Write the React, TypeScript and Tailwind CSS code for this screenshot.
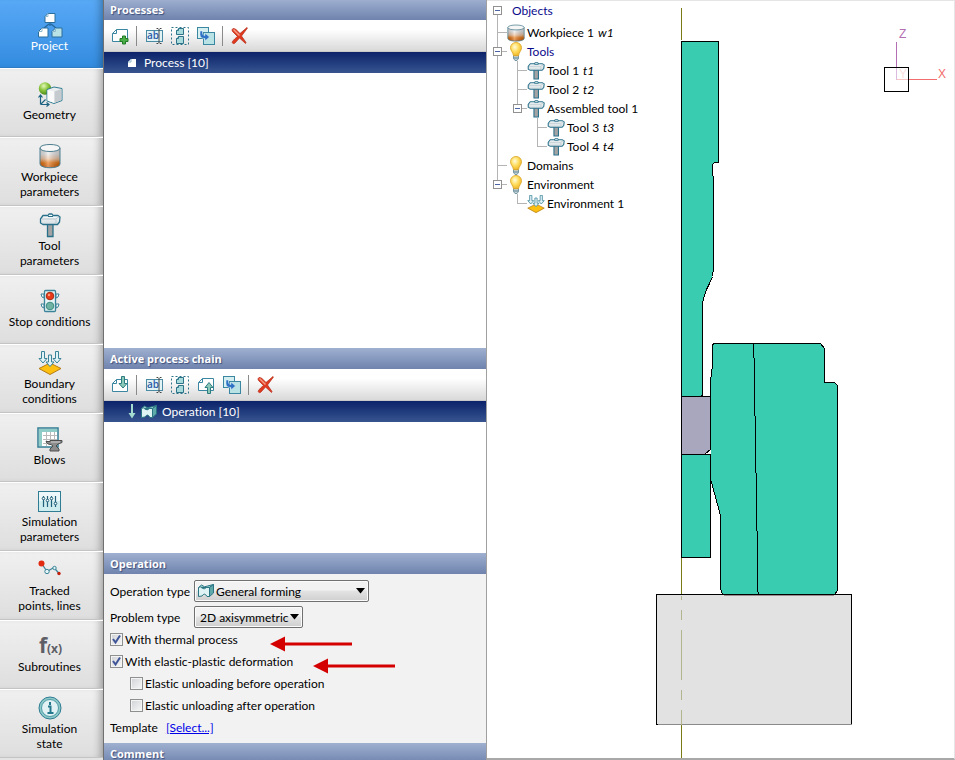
import { useState, type ReactNode } from 'react';

type IconProps = { small?: boolean };

function WorkpieceIcon({ small }: IconProps) {
    return (
        <svg width={small ? 18 : 26} height={small ? 18 : 26} viewBox={small ? '2 0 22 26' : '0 0 26 26'} preserveAspectRatio="none">
            <defs>
                <linearGradient id="heat" x1="0" y1="0" x2="0" y2="1">
                    <stop offset="0.3" stopColor="#e8e8e8" />
                    <stop offset="0.55" stopColor="#efc3a0" />
                    <stop offset="0.75" stopColor="#e8730c" />
                    <stop offset="1" stopColor="#c85400" />
                </linearGradient>
                <linearGradient id="shine" x1="0" y1="0" x2="1" y2="0">
                    <stop offset="0" stopColor="#000" stopOpacity="0.15" />
                    <stop offset="0.4" stopColor="#fff" stopOpacity="0.35" />
                    <stop offset="1" stopColor="#000" stopOpacity="0.2" />
                </linearGradient>
            </defs>
            <path d="M3 5v16c0 5 20 5 20 0V5z" fill="url(#heat)" />
            <path d="M3 5v16c0 5 20 5 20 0V5z" fill="url(#shine)" />
            <ellipse cx="13" cy="5" rx="10" ry="3.500" fill="#f6f6f6" />
            <path d="M3 5v16c0 5 20 5 20 0V5M3 5c0-4.700 20-4.700 20 0s-20 4.700-20 0z" fill="none" stroke="#4f7f90" />
        </svg>
    );
}

function HammerIcon({ small }: IconProps) {
    return (
        <svg width={small ? 18 : 26} height={small ? 18 : 26} viewBox={small ? '2 1 22 25' : '0 0 26 26'} preserveAspectRatio="none">
            <defs>
                <linearGradient id="steel" x1="0" y1="0" x2="0" y2="1">
                    <stop offset="0" stopColor="#fff" />
                    <stop offset="1" stopColor="#d3dde0" />
                </linearGradient>
            </defs>
            <path d="M10.500 11h5.500v13.500h-5.500z" fill="#a3a3a3" stroke="#28708a" strokeWidth="1.300" />
            <path d="M3.500 7l2.500-3.500h5l1-1.500h3l1 1.500h5l2 1.500-0.500 5-2 2.500H6l-2.500-1.500z" fill="url(#steel)" stroke="#28708a" strokeWidth="1.300" strokeLinejoin="round" />
            <path d="M4.500 7h14l3.500-2M19 7.500v4" fill="none" stroke="#b7c7cd" />
            <path d="M11 4.500h5" stroke="#28708a" />
        </svg>
    );
}

function BoundaryIcon({ small }: IconProps) {
    const arrow = 'h3v7h2.500l-4 4.500-4-4.500h2.500z';
    return (
        <svg width={small ? 18 : 26} height={small ? 18 : 26} viewBox={small ? '1 1 24 24' : '0 0 26 26'}>
            <path d="M2 18.500l11-5.500 11 5.500-11 6z" fill="#fdbf10" stroke="#b57b14" />
            <path d={`M4.500 1.500${arrow}M18.500 1.500${arrow}`} fill="#dff2f5" stroke="#3a8398" />
            <path d={`M11.500 5${arrow}`} fill="#dff2f5" stroke="#3a8398" />
        </svg>
    );
}

function ProjectIcon() {
    return (
        <svg width="26" height="26" viewBox="0 0 26 26">
            <path d="M13 11v3M7 16l5-4M19 16l-5-4" stroke="#24679b" strokeWidth="1.300" />
            <path d="M11 1.500h7v9H8v-6z" fill="#fff" stroke="#2a6f9c" />
            <path d="M5 16h6v9H1.500v-5.500z" fill="#fff" stroke="#2a6f9c" />
            <path d="M18.500 16H25v9H15v-5.500z" fill="#b9e2e6" stroke="#2a6f9c" />
            <path d="M11 1.500V4.500H8M5 16v3.500H1.500M18.500 16v3.500H15" fill="none" stroke="#8fb8cc" />
        </svg>
    );
}

function GeometryIcon() {
    return (
        <svg width="26" height="26" viewBox="0 0 26 26">
            <defs>
                <radialGradient id="ball" cx="0.4" cy="0.3" r="0.7">
                    <stop offset="0" stopColor="#e3f8b8" />
                    <stop offset="0.5" stopColor="#8cc63f" />
                    <stop offset="1" stopColor="#4c8a1a" />
                </radialGradient>
            </defs>
            <circle cx="8" cy="7.500" r="6.200" fill="url(#ball)" />
            <path d="M10 8.500l7-2.500 8 1.500v12l-8 3-7-2.500z" fill="#e9edef" stroke="#2f7c93" strokeLinejoin="round" />
            <path d="M10.500 9l7 1.500v11.500l-7-2.500z" fill="#fafafa" />
            <path d="M17.500 10.500l7-2.500v11l-7 3z" fill="#c4cacd" />
            <path d="M3.500 23.500V15M1.500 16.500l2-2.500 2 2.500M3.500 23.500H11M9.500 21.500l2.500 2-2.500 2M3.500 23.500l5-5" fill="none" stroke="#1e6482" strokeWidth="1.200" />
        </svg>
    );
}

function TrafficLightIcon() {
    return (
        <svg width="26" height="26" viewBox="0 0 26 26">
            <path d="M7 6H4l1 3 2 1zM7 16H4l1 3 2 1zM19 6h3l-1 3-2 1zM19 16h3l-1 3-2 1z" fill="#fff" stroke="#3a8398" />
            <rect x="7.500" y="2.500" width="11" height="21" rx="1" fill="#e5f4f6" stroke="#3a8398" strokeWidth="1.300" />
            <circle cx="13" cy="8" r="3.800" fill="#ea3a17" stroke="#a32d18" />
            <circle cx="12" cy="7" r="1.200" fill="#ff9c7d" />
            <circle cx="13" cy="18" r="3.800" fill="#6fb3a4" stroke="#3d8b80" />
        </svg>
    );
}

function BlowsIcon() {
    return (
        <svg width="26" height="26" viewBox="0 0 26 26">
            <rect x="1" y="2" width="20" height="19" fill="#fff" stroke="#2f7c93" strokeWidth="1.500" />
            <path d="M2 3h18v3H5v14H2z" fill="#8fccc8" />
            <path d="M6 9.500h14M6 13.500h14M6 17.500h6M9.500 6v14M13.500 6v8M17.500 6v8" stroke="#b9b9b9" />
            <path d="M9 15.500h4v-1h12v2l-4 1.500-2 2 3 3v2h-9v-2l3-3-2-1.500c-3 0-4-1-5-3z" fill="#8b8b8b" stroke="#4c4c4c" />
            <path d="M14 16h9" stroke="#d0d0d0" />
        </svg>
    );
}

function SlidersIcon() {
    return (
        <svg width="26" height="26" viewBox="0 0 26 26">
            <rect x="1.500" y="3.500" width="22" height="20" fill="#cfecee" stroke="#2f7c93" />
            <rect x="2" y="4" width="21" height="9" fill="#ecf8f9" />
            <path d="M6.500 8v11M10.500 8v11M14.500 8v11M18.500 8v11" stroke="#20607a" strokeWidth="1.200" />
            <g fill="#fff" stroke="#20607a">
                <circle cx="6.500" cy="10.500" r="1.300" />
                <circle cx="10.500" cy="12.500" r="1.300" />
                <circle cx="14.500" cy="10.500" r="1.300" />
                <circle cx="18.500" cy="15.500" r="1.300" />
            </g>
        </svg>
    );
}

function TrackedIcon() {
    return (
        <svg width="26" height="26" viewBox="0 0 26 26">
            <path d="M5 7l5 7.500 7-4 5 6" fill="none" stroke="#3a8398" strokeWidth="1.300" />
            <circle cx="4.500" cy="6.500" r="3" fill="#e12a10" />
            <circle cx="10" cy="14.500" r="2.200" fill="#e5f4f6" stroke="#3a8398" />
            <circle cx="17.500" cy="11" r="1.700" fill="#e5f4f6" stroke="#3a8398" />
            <circle cx="22" cy="16.500" r="1.700" fill="#c41d0c" />
        </svg>
    );
}

function FunctionIcon() {
    return (
        <svg width="26" height="26" viewBox="0 0 26 26" fill="#5e5e66" fontFamily="Open Sans, sans-serif" fontWeight="700">
            <text x="2" y="20" fontSize="21">f</text>
            <text x="10" y="20" fontSize="12">(x)</text>
        </svg>
    );
}

function InfoIcon() {
    return (
        <svg width="26" height="26" viewBox="0 0 26 26">
            <circle cx="13" cy="13" r="11" fill="#8cc9c8" stroke="#2f7c93" />
            <circle cx="13" cy="13" r="8.500" fill="#e2f2f4" stroke="#4f9aa6" />
            <path d="M13 7v3M11 11.500h2.500V18M10.500 18h6" fill="none" stroke="#24788c" strokeWidth="2" />
        </svg>
    );
}

function BulbIcon() {
    return (
        <svg width="18" height="19" viewBox="0 0 18 19">
            <defs>
                <radialGradient id="glow" cx="0.4" cy="0.35" r="0.7">
                    <stop offset="0" stopColor="#fffbe0" />
                    <stop offset="0.45" stopColor="#ffe066" />
                    <stop offset="1" stopColor="#f0b21c" />
                </radialGradient>
            </defs>
            <path d="M6.500 13.500h5v3l-1.500 2h-2l-1.500-2z" fill="#c4d3d8" stroke="#5f8594" strokeWidth="0.800" />
            <path d="M9 0.500c-3.200 0-5.500 2.300-5.500 5.200 0 3.300 2.500 4.300 3 8h5c0.500-3.700 3-4.700 3-8 0-2.900-2.300-5.200-5.500-5.200z" fill="url(#glow)" stroke="#d9a326" strokeWidth="0.800" />
            <path d="M6.500 16h5" stroke="#5f8594" />
        </svg>
    );
}

function FormingIcon() {
    return (
        <svg width="18" height="16" viewBox="0 0 18 16">
            <path d="M1.500 4.500L4.500 2q3 3 6 1l6-1.500-4 3z" fill="#93cbc9" stroke="#2b7583" />
            <path d="M12.500 4.500l4-3V10l-4 3.500z" fill="#5fa9aa" stroke="#2b7583" />
            <path d="M1.500 4.500q2-1.500 3.500 0.500 2 2 4.500-0.500h3v9h-2.500q-2.500-4.500-5-0.500L1.500 13.500z" fill="#dff3f4" stroke="#2b7583" strokeLinejoin="round" />
        </svg>
    );
}

function NewPageIcon() {
    return (
        <svg width="18" height="18" viewBox="0 0 18 18">
            <path d="M5.500 2.500h11v12h-15v-8z" fill="#fff" stroke="#3b86a0" />
            <path d="M5.500 2.500v4h-4" fill="none" stroke="#3b86a0" />
            <path d="M11.500 9h3v2.500H17v3h-2.500V17h-3v-2.500H9v-3h2.500z" fill="#4cae46" stroke="#1f7a25" />
        </svg>
    );
}

function InsertIcon() {
    return (
        <svg width="18" height="18" viewBox="0 0 18 18">
            <path d="M5.500 3.500h11v12h-15v-8z" fill="#fff" stroke="#3b86a0" />
            <path d="M5.500 3.500v4h-4" fill="none" stroke="#3b86a0" />
            <path d="M10.500 0.500h3v7h2.500l-4 4.500-4-4.500h2.500z" fill="#8cc9b8" stroke="#2f7c80" />
        </svg>
    );
}

function ExtractIcon() {
    return (
        <svg width="18" height="18" viewBox="0 0 18 18">
            <path d="M5.500 2.500h11v12h-15v-8z" fill="#fff" stroke="#3b86a0" />
            <path d="M5.500 2.500v4h-4" fill="none" stroke="#3b86a0" />
            <path d="M10.500 17.500h3v-6h2.500l-4-5-4 5h2.500z" fill="#8cc9b8" stroke="#2f7c80" />
        </svg>
    );
}

function RenameIcon() {
    return (
        <svg width="18" height="18" viewBox="0 0 18 18">
            <rect x="1.500" y="3.500" width="16" height="11" fill="#e2f3f6" stroke="#4a8aa3" />
            <text x="2" y="12" fontSize="10" fontWeight="600" fontFamily="Open Sans, sans-serif" fill="#2b5aa8">ab</text>
            <path d="M11.500 1.500h1.500l1 1 1-1h1.500M14 2.500v13M11.500 16.500h1.500l1-1 1 1h1.500" fill="none" stroke="#444" />
        </svg>
    );
}

function SelectAllIcon() {
    return (
        <svg width="18" height="18" viewBox="0 0 18 18">
            <rect x="0.500" y="0.500" width="17" height="17" fill="none" stroke="#2d7389" strokeDasharray="2 2" />
            <path d="M7.500 1.500h5v6h-7v-4zM7.500 9.500h5v7h-7v-5z" fill="#a9dadc" stroke="#2d7389" />
            <path d="M7.500 1.500v2h-2M7.500 9.500v2h-2" fill="#fff" stroke="#2d7389" />
        </svg>
    );
}

function DuplicateIcon() {
    return (
        <svg width="18" height="18" viewBox="0 0 18 18">
            <rect x="0.500" y="0.500" width="11" height="11" fill="#d5eef0" stroke="#3b86a0" />
            <rect x="6.500" y="5.500" width="11" height="12" fill="#b9e2e4" stroke="#3b86a0" />
            <path d="M3 4v3.500c0 3 2 4 5 4v2.500l4.500-4-4.500-4v2.500c-2 0-2.500-1-2.500-4.500z" fill="#2f72c4" stroke="#e5f4ff" strokeWidth="0.500" />
        </svg>
    );
}

function DeleteIcon() {
    return (
        <svg width="18" height="18" viewBox="0 0 18 18">
            <path d="M2 1.500c-1.500 1-1 2.500 0 3.500l4.500 4.500C4.500 11 2.500 13 1.500 14.500c-1 1.500 1 3 2.500 1.500l4.500-5 6 5.500 0.500-1-4.500-6.500L16.500 1l-0.500-0.500L9 6.500 4.500 2z" fill="#e0391f" stroke="#b32815" strokeWidth="0.700" />
            <path d="M2.500 2.500l6 6" stroke="#f59a83" strokeWidth="1.500" />
        </svg>
    );
}

type NavItem = { label: string; icon: ReactNode; active?: boolean; wrap?: boolean };

const navItems: NavItem[] = [
    { label: 'Project', icon: <ProjectIcon />, active: true },
    { label: 'Geometry', icon: <GeometryIcon /> },
    { label: 'Workpiece parameters', icon: <WorkpieceIcon />, wrap: true },
    { label: 'Tool parameters', icon: <HammerIcon />, wrap: true },
    { label: 'Stop conditions', icon: <TrafficLightIcon /> },
    { label: 'Boundary conditions', icon: <BoundaryIcon />, wrap: true },
    { label: 'Blows', icon: <BlowsIcon /> },
    { label: 'Simulation parameters', icon: <SlidersIcon />, wrap: true },
    { label: 'Tracked points, lines', icon: <TrackedIcon />, wrap: true },
    { label: 'Subroutines', icon: <FunctionIcon /> },
    { label: 'Simulation state', icon: <InfoIcon />, wrap: true },
];

function Sidebar() {
    return (
        <nav className="flex w-[104px] shrink-0 flex-col border-r border-[#707070] bg-[#e4e4e4]">
            {navItems.map((item) => (
                <button
                    key={item.label}
                    type="button"
                    className={
                        item.active
                            ? 'flex h-[69px] shrink-0 flex-col items-center justify-center border-b border-[#2f7cc4] bg-linear-to-b from-[#58a9f6] to-[#338ce0] pr-1 pb-0.5 text-white shadow-[inset_-8px_0_8px_-6px_#00000055]'
                            : 'flex h-[69px] shrink-0 flex-col items-center justify-center border-t border-b border-t-white border-b-[#c4c4c4] bg-linear-to-b from-[#f0f0f0] to-[#dedede] pr-1 pb-0.5 shadow-[inset_-8px_0_8px_-6px_#00000055]'
                    }
                >
                    {item.icon}
                    <span className={item.wrap ? 'w-[76px]' : 'whitespace-nowrap'}>{item.label}</span>
                </button>
            ))}
        </nav>
    );
}

function PanelHeader({ children }: { children: ReactNode }) {
    return (
        <h2 className="h-[21px] shrink-0 bg-linear-to-b from-[#9fb0d0] to-[#6f83ad] px-1.5 font-[Open_Sans,sans-serif] text-[11px] leading-[21px] font-bold text-white [text-shadow:1px_1px_1px_#3c4f7c]">
            {children}
        </h2>
    );
}

function Toolbar({ children }: { children: ReactNode }) {
    return (
        <div className="flex h-8 shrink-0 items-center border-b border-[#c8c8c8] bg-linear-to-b from-white from-30% to-[#d9d9d9] pl-[3px]">
            {children}
        </div>
    );
}

function ToolButton({ label, children }: { label: string; children: ReactNode }) {
    return (
        <button type="button" aria-label={label} title={label} className="flex h-7 w-[26px] items-center justify-center">
            {children}
        </button>
    );
}

function Separator() {
    return (
        <div className="w-2 pl-[3px]">
            <div className="h-5 w-px bg-[#8a8a8a]" />
        </div>
    );
}

function RedArrow() {
    return (
        <svg width="82" height="16" viewBox="0 0 82 16" fill="#d40000">
            <path d="M0 8L15 0.500v15z" />
            <rect x="14" y="6.500" width="68" height="3" />
        </svg>
    );
}

function CheckRow({ label, checked, children }: { label: string; checked?: boolean; children?: ReactNode }) {
    const [on, setOn] = useState(Boolean(checked));

    return (
        <div className="relative flex h-[22px] items-center">
            <label className="flex items-center gap-0.5">
                <span className="grid">
                    <input
                        type="checkbox"
                        checked={on}
                        onChange={(e) => setOn(e.target.checked)}
                        className="col-start-1 row-start-1 size-[13px] appearance-none border border-[#8e8f8f] bg-linear-to-br from-[#cfd2d6] to-[#f8f8f8] shadow-[inset_0_0_0_1px_#f4f4f4]"
                    />
                    {on ? (
                        <svg className="pointer-events-none col-start-1 row-start-1" width="13" height="13" viewBox="0 0 13 13">
                            <path d="M3 6l2.500 3.500L10 2.500" fill="none" stroke="#3f5598" strokeWidth="2" />
                        </svg>
                    ) : null}
                </span>
                {label}
            </label>
            {children}
        </div>
    );
}

const selectStyle =
    'h-[22px] w-full appearance-none rounded-[2px] border border-[#707070] bg-linear-to-b from-[#f2f2f2] from-45% via-[#e3e3e3] via-50% to-[#cfcfcf] pr-2.5 shadow-[inset_0_0_0_1px_#fbfbfb]';

function Caret() {
    return (
        <svg className="pointer-events-none absolute top-2 right-1" width="9" height="6" viewBox="0 0 9 6">
            <path d="M0 0h9L4.500 5.500z" />
        </svg>
    );
}

function OperationForm() {
    return (
        <form className="flex shrink-0 flex-col bg-[#f2f2f2] px-1.5 pt-1.5 pb-[5px]">
            <div className="mb-1 flex items-center">
                <label htmlFor="operation-type" className="w-[84px]">Operation type</label>
                <div className="relative w-[175px]">
                    <select id="operation-type" className={`${selectStyle} pl-[21px]`}>
                        <option>General forming</option>
                    </select>
                    <span className="pointer-events-none absolute top-[3px] left-[3px]">
                        <FormingIcon />
                    </span>
                    <Caret />
                </div>
            </div>
            <div className="flex items-center">
                <label htmlFor="problem-type" className="w-[84px]">Problem type</label>
                <div className="relative w-[109px]">
                    <select id="problem-type" className={`${selectStyle} pl-[5px]`}>
                        <option>2D axisymmetric</option>
                    </select>
                    <Caret />
                </div>
            </div>
            <CheckRow label="With thermal process" checked>
                <span className="absolute top-2 left-[160px]">
                    <RedArrow />
                </span>
            </CheckRow>
            <CheckRow label="With elastic-plastic deformation" checked>
                <span className="absolute top-2 left-[203px]">
                    <RedArrow />
                </span>
            </CheckRow>
            <div className="pl-5">
                <CheckRow label="Elastic unloading before operation" />
                <CheckRow label="Elastic unloading after operation" />
            </div>
            <div className="flex h-[22px] items-center gap-2">
                <span>Template</span>
                <a href="#template" className="text-[#0000e8] underline">[Select...]</a>
            </div>
        </form>
    );
}

const selectedRow = 'flex h-[21px] items-center bg-linear-to-b from-[#0c226a] to-[#38548f] text-white';

function ProcessColumn() {
    return (
        <main className="flex w-[383px] shrink-0 flex-col overflow-hidden border-r border-[#a0a0a0]">
            <PanelHeader>Processes</PanelHeader>
            <Toolbar>
                <ToolButton label="New process"><NewPageIcon /></ToolButton>
                <Separator />
                <ToolButton label="Rename"><RenameIcon /></ToolButton>
                <ToolButton label="Select all"><SelectAllIcon /></ToolButton>
                <ToolButton label="Duplicate"><DuplicateIcon /></ToolButton>
                <Separator />
                <ToolButton label="Delete"><DeleteIcon /></ToolButton>
            </Toolbar>
            <ul className="flex-[37_1_0%] bg-white">
                <li className={`${selectedRow} gap-2 pl-6`}>
                    <svg width="8" height="8" viewBox="0 0 8 8">
                        <path d="M3 0h5v8H0V3z" fill="#fff" />
                        <path d="M3 0v3H0" fill="none" stroke="#8fb8cc" />
                    </svg>
                    Process [10]
                </li>
            </ul>

            <PanelHeader>Active process chain</PanelHeader>
            <Toolbar>
                <ToolButton label="Insert operation"><InsertIcon /></ToolButton>
                <Separator />
                <ToolButton label="Rename"><RenameIcon /></ToolButton>
                <ToolButton label="Select all"><SelectAllIcon /></ToolButton>
                <ToolButton label="Extract"><ExtractIcon /></ToolButton>
                <ToolButton label="Duplicate"><DuplicateIcon /></ToolButton>
                <Separator />
                <ToolButton label="Delete"><DeleteIcon /></ToolButton>
            </Toolbar>
            <ul className="flex-[19_1_0%] bg-white">
                <li className={`${selectedRow} gap-1 pl-6`}>
                    <svg width="8" height="15" viewBox="0 0 8 15">
                        <path d="M3 0h2v9h2.500L4 14.500 0.500 9H3z" fill="#a5dcd0" />
                    </svg>
                    <FormingIcon />
                    Operation [10]
                </li>
            </ul>

            <PanelHeader>Operation</PanelHeader>
            <OperationForm />
            <div className="-mb-1 shrink-0">
                <PanelHeader>Comment</PanelHeader>
            </div>
        </main>
    );
}

type Guide = 'blank' | 'line' | 'tee' | 'end' | 'root' | 'open' | 'openEnd';

const guidePaths: Record<Guide, string> = {
    blank: '',
    line: 'M10.500 0v19',
    tee: 'M10.500 0v19M10.500 9.500H20',
    end: 'M10.500 0v9.500H20',
    root: 'M10.500 14v8',
    open: 'M10.500 0v5M10.500 14v5M15 9.500h5',
    openEnd: 'M10.500 0v5M15 9.500h5',
};

function TreeGuide({ kind }: { kind: Guide }) {
    const expander = kind === 'root' || kind === 'open' || kind === 'openEnd';
    const height = kind === 'root' ? 22 : 19;
    return (
        <svg width="20" height={height} viewBox={`0 0 20 ${height}`} fill="none" shapeRendering="crispEdges">
            <path d={guidePaths[kind]} stroke="#b4b4b4" />
            {expander ? (
                <>
                    <rect x="6.500" y="5.500" width="8" height="8" fill="#fff" stroke="#919191" />
                    <path d="M8 9.500h5" stroke="#4b63a7" />
                </>
            ) : null}
        </svg>
    );
}

type TreeRow = { label: string; code?: string; guides: Guide[]; icon?: ReactNode; blue?: boolean };

const treeRows: TreeRow[] = [
    { label: 'Objects', guides: ['root'], blue: true },
    { label: 'Workpiece 1', code: 'w1', guides: ['tee'], icon: <WorkpieceIcon small /> },
    { label: 'Tools', guides: ['open'], icon: <BulbIcon />, blue: true },
    { label: 'Tool 1', code: 't1', guides: ['line', 'tee'], icon: <HammerIcon small /> },
    { label: 'Tool 2', code: 't2', guides: ['line', 'tee'], icon: <HammerIcon small /> },
    { label: 'Assembled tool 1', guides: ['line', 'openEnd'], icon: <HammerIcon small /> },
    { label: 'Tool 3', code: 't3', guides: ['line', 'blank', 'tee'], icon: <HammerIcon small /> },
    { label: 'Tool 4', code: 't4', guides: ['line', 'blank', 'end'], icon: <HammerIcon small /> },
    { label: 'Domains', guides: ['tee'], icon: <BulbIcon /> },
    { label: 'Environment', guides: ['openEnd'], icon: <BulbIcon /> },
    { label: 'Environment 1', guides: ['blank', 'end'], icon: <BoundaryIcon small /> },
];

function ObjectTree() {
    return (
        <ul className="relative w-fit">
            {treeRows.map((row) => (
                <li key={row.label} className="flex items-center leading-[19px]">
                    {row.guides.map((kind, i) => (
                        <TreeGuide key={i} kind={kind} />
                    ))}
                    {row.icon}
                    <span className={row.blue ? (row.icon ? 'pl-0.5 text-[#0a0a8c]' : 'self-start pl-[5px] text-[#0a0a8c]') : 'pl-0.5'}>
                        {row.label}
                        {row.code ? <i className="ml-1">{row.code}</i> : null}
                    </span>
                </li>
            ))}
        </ul>
    );
}

// Axisymmetric section, drawn in window coordinates
function Viewport() {
    return (
        <svg className="absolute inset-0 size-full" shapeRendering="crispEdges">
            <g transform="translate(-486.500 -0.500)" stroke="#000" fill="#3accb0">
                <path d="M681 7v32M681 557v201" stroke="#7a7a14" />
                <path d="M681 41h37v121h-4l-2 2v11l1 1v91l-1 9-3 7-3 6-3 9-1 5v91l-1 2h-20z" />
                <path d="M713 343H820L824 348V382H834L837 385V590L834 594H722L720 588V515L711 482L710 478V377L711 376V369L712 368V345z" />
                <path d="M753 343v14l1 1v57l1 1v56l1 1v57l1 1v57l1 7" fill="none" />
                <path d="M681 396h29v58h-29z" fill="#a9a7bd" />
                <path d="M704 454l6-5v5z" fill="#fff" stroke="none" />
                <path d="M704 454l7-6" fill="none" />
                <path d="M681 454h29v103h-29z" />
                <rect x="656" y="594" width="195" height="130" fill="#e2e2e2" />
                <path d="M723 595h110" stroke="#9b8d8d" />
                <path d="M657 724h194" stroke="#8a8a8a" />
                <path d="M681 595v4M681 609v10M681 629v50M681 689v10M681 709v15" stroke="#b3b58e" />
                <path d="M896 41v26" stroke="#b36fb3" />
                <path d="M896 67v12" stroke="#dcbbe0" />
                <path d="M896 79h12" stroke="#f9c4c4" />
                <path d="M908 79h28" stroke="#f26d6d" />
                <rect x="884" y="67" width="24" height="24" fill="none" />
            </g>
            <g transform="translate(-487)" fontFamily="Liberation Sans, sans-serif" fontSize="12">
                <text x="899" y="37" fill="#b36fb3">Z</text>
                <text x="938" y="77" fill="#f26d6d">X</text>
                <text x="899" y="77" fill="#fbe0e0">Y</text>
            </g>
        </svg>
    );
}

export default function App() {
    return (
        <div className="flex h-screen overflow-hidden bg-white font-[Lato,sans-serif] text-[12px] leading-[15px] text-black [font-variant-ligatures:none]">
            <div className="-mt-px flex shrink-0">
                <Sidebar />
                <ProcessColumn />
            </div>
            <section className="relative min-w-0 flex-1 border-t border-r border-b-2 border-[#e5e5e5] border-b-[#a8a8a8]">
                <Viewport />
                <ObjectTree />
            </section>
        </div>
    );
}
